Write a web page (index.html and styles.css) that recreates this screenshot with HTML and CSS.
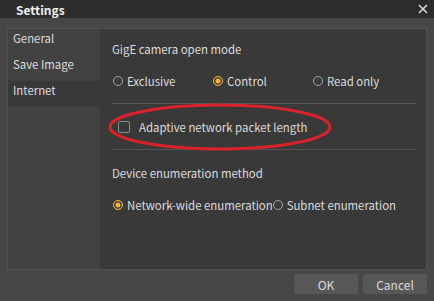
FILE: index.html
```html
<!DOCTYPE html>
<html>
<head>
    <meta name="viewport" content="width=device-width, initial-scale=1.0">
    <title>Settings</title>
    <link rel="stylesheet" href="styles.css">
</head>
<body>
    <div class="titlebar">
        <span class="title">Settings</span>
        <svg class="close" width="10" height="10" viewBox="0 0 10 10">
            <path d="M1 1 L9 9 M9 1 L1 9" stroke="#d8d8d8" stroke-width="1.6" fill="none"/>
        </svg>
    </div>

    <div class="dialog">
        <div class="panel">
            <div class="sidebar">
                <div class="nav-item">General</div>
                <div class="nav-item">Save Image</div>
                <div class="nav-item active">Internet</div>
            </div>

            <div class="content">
                <div class="group-title">GigE camera open mode</div>
                <div class="radio-row fixed">
                    <label class="radio"><span class="dot"></span>Exclusive</label>
                    <label class="radio checked"><span class="dot"></span>Control</label>
                    <label class="radio"><span class="dot"></span>Read only</label>
                </div>

                <div class="separator"></div>

                <div class="check-row">
                    <span class="box"></span>Adaptive network packet length
                    <svg class="mark" width="230" height="50" viewBox="0 0 230 50">
                        <ellipse cx="114" cy="24" rx="110" ry="22" stroke="#d9222a" stroke-width="3" fill="none"/>
                    </svg>
                </div>

                <div class="separator"></div>

                <div class="group-title">Device enumeration method</div>
                <div class="radio-row">
                    <label class="radio checked"><span class="dot"></span>Network-wide enumeration</label>
                    <label class="radio"><span class="dot"></span>Subnet enumeration</label>
                </div>
            </div>
        </div>

        <div class="footer">
            <button class="btn">OK</button>
            <button class="btn">Cancel</button>
        </div>
    </div>
</body>
</html>
```

FILE: styles.css
```css
body {
    margin: 0;
    width: 434px;
    height: 301px;
    overflow: hidden;
    font-family: "Noto Sans CJK SC", "Noto Sans", sans-serif;
    font-size: 11.4px;
    color: #dcdcdc;
    background-color: #474747;
}

.titlebar {
    height: 18px;
    background-color: #2c2c2c;
    display: flex;
    align-items: center;
    justify-content: space-between;
    padding: 0 6px 0 16px;
}

.title {
    font-weight: bold;
    font-size: 12px;
    color: #f0f0f0;
}

.dialog {
    padding: 10px 7px 0 7px;
}

.panel {
    display: flex;
    height: 240px;
    border: 1px solid #525252;
}

.sidebar {
    width: 92px;
    background-color: #424242;
}

.nav-item {
    height: 26px;
    line-height: 19px;
    padding-left: 5px;
    color: #dedede;
}

.nav-item.active {
    background-color: #393939;
}

.content {
    flex: 1;
    background-color: #393939;
    padding: 9px 10px 0 12px;
}

.group-title {
    line-height: 22px;
}

.radio-row {
    display: flex;
    height: 22px;
    align-items: center;
    margin-top: 10px;
    margin-bottom: 11px;
    padding-left: 1px;
}

.radio-row.fixed .radio {
    width: 100px;
}

.radio {
    display: flex;
    align-items: center;
    white-space: nowrap;
}

.dot {
    width: 8px;
    height: 8px;
    border: 1.5px solid #a8a8a8;
    border-radius: 50%;
    margin-right: 4px;
    box-sizing: content-box;
}

.radio.checked .dot {
    border-color: #f2b33d;
    background-color: #f2b33d;
    box-shadow: inset 0 0 0 1.5px #393939;
}

.separator {
    height: 1px;
    background-color: #545454;
}

.check-row {
    position: relative;
    display: flex;
    align-items: center;
    height: 22px;
    margin: 12px 0 11px 0;
    padding-left: 6px;
}

.box {
    width: 10px;
    height: 10px;
    border: 1.5px solid #8a8a8a;
    border-radius: 2px;
    margin-right: 9px;
}

.mark {
    position: absolute;
    left: -6px;
    top: -13px;
}

.check-row + .separator + .group-title {
    margin-top: 12px;
}

.footer {
    display: flex;
    justify-content: flex-end;
    gap: 5px;
    padding-top: 4px;
}

.btn {
    width: 64px;
    height: 20px;
    border: none;
    border-radius: 2px;
    background-color: #575757;
    color: #dcdcdc;
    font-family: "Noto Sans CJK SC", "Noto Sans", sans-serif;
    font-size: 12px;
    padding: 0;
}
```
